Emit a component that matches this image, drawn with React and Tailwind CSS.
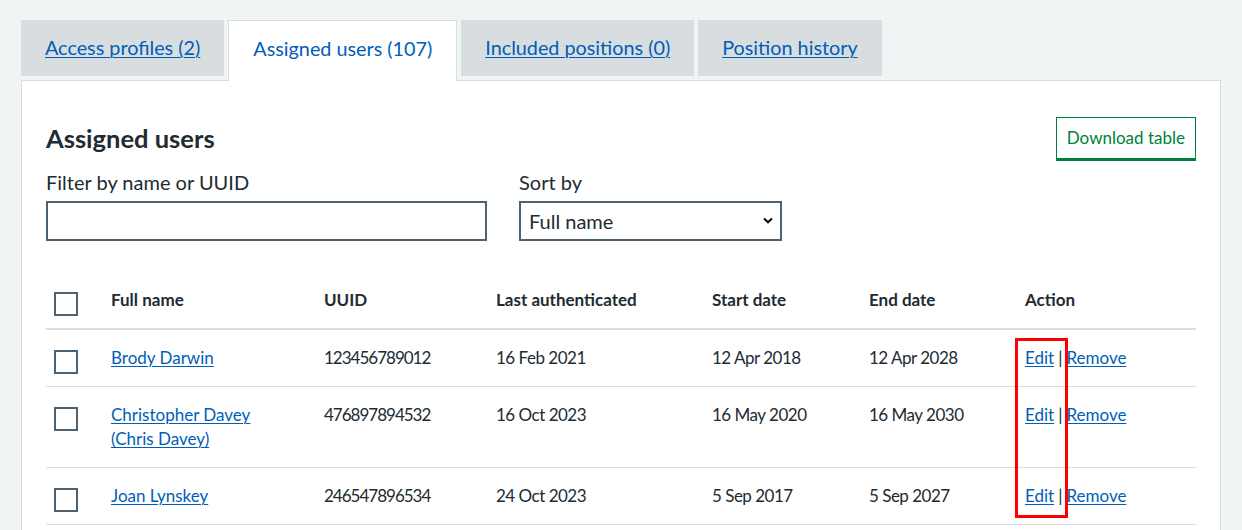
const tabs = [
  { label: 'Access profiles (2)', active: false },
  { label: 'Assigned users (107)', active: true },
  { label: 'Included positions (0)', active: false },
  { label: 'Position history', active: false },
];

const users = [
  { name: ['Brody Darwin'], uuid: '123456789012', last: '16 Feb 2021', start: '12 Apr 2018', end: '12 Apr 2028' },
  { name: ['Christopher Davey', '(Chris Davey)'], uuid: '476897894532', last: '16 Oct 2023', start: '16 May 2020', end: '16 May 2030' },
  { name: ['Joan Lynskey'], uuid: '246547896534', last: '24 Oct 2023', start: '5 Sep 2017', end: '5 Sep 2027' },
];

const Checkbox = () => (
  <div className="translate-y-1 ml-2 w-6 h-6 border-2 border-[#4c6272] bg-white"></div>
);

const App = () => {
  return (
    <div className="min-h-[530px] bg-[#f0f4f5] px-[21px] pt-5 text-[#212b32] font-['Lato','Liberation_Sans',sans-serif] text-[17px] leading-6">
      <div className="flex items-start gap-1 text-[19.8px]">
        {tabs.map((t) =>
          t.active ? (
            <div key={t.label} className="relative z-10 -mb-px bg-white border border-b-0 border-[#d8dde0] px-6 pt-[15px] pb-[21px] text-[#005eb8]">
              {t.label}
            </div>
          ) : (
            <div key={t.label} className="bg-[#d8dde0] px-6 pt-[15px] pb-[17px]">
              <a href="#" className="text-[#005eb8] underline decoration-1 underline-offset-2">{t.label}</a>
            </div>
          )
        )}
      </div>

      <div className="bg-white border border-[#d8dde0] px-6 pt-9 pb-10 min-h-[460px]">
        <div className="flex items-center justify-between">
          <h2 className="text-[25.5px] leading-8 font-bold">Assigned users</h2>
          <button className="border border-[#007f3b] shadow-[0_2px_0_#007f3b] bg-white text-[#007f3b] px-[10px] py-2 leading-6">
            Download table
          </button>
        </div>

        <div className="flex gap-8 mt-[11px] text-[20px]">
          <div className="flex flex-col">
            <label className="mb-[7px]">Filter by name or UUID</label>
            <input className="w-[441px] h-10 border-2 border-[#4c6272] px-2 outline-none" />
          </div>
          <div className="flex flex-col">
            <label className="mb-[7px]">Sort by</label>
            <div className="relative">
              <select className="appearance-none w-[263px] h-10 border-2 border-[#4c6272] bg-white px-2 text-[#212b32]">
                <option>Full name</option>
              </select>
              <svg className="absolute right-[9px] top-[16px] pointer-events-none" width="10" height="7" viewBox="0 0 10 7">
                <path d="M1 1.5 5 5.2 9 1.5" fill="none" stroke="#111" strokeWidth="2.2" />
              </svg>
            </div>
          </div>
        </div>

        <div className="relative mt-[39px]">
          <table className="w-full table-fixed border-collapse text-left">
            <colgroup>
              <col className="w-[65px]" />
              <col className="w-[213px]" />
              <col className="w-[172px]" />
              <col className="w-[216px]" />
              <col className="w-[157px]" />
              <col className="w-[156px]" />
              <col />
            </colgroup>
            <thead>
              <tr className="border-b-2 border-[#d8dde0]">
                <th className="pt-2 pb-4 align-top font-normal"><Checkbox /></th>
                <th className="pt-2 pb-4 align-top font-bold">Full name</th>
                <th className="pt-2 pb-4 align-top font-bold">UUID</th>
                <th className="pt-2 pb-4 align-top font-bold">Last authenticated</th>
                <th className="pt-2 pb-4 align-top font-bold">Start date</th>
                <th className="pt-2 pb-4 align-top font-bold">End date</th>
                <th className="pt-2 pb-4 align-top font-bold">Action</th>
              </tr>
            </thead>
            <tbody>
              {users.map((u) => (
                <tr key={u.uuid} className="border-b border-[#d8dde0]">
                  <td className="py-4 align-top"><Checkbox /></td>
                  <td className="py-4 align-top">
                    <a href="#" className="text-[#005eb8] underline decoration-1 underline-offset-2">
                      {u.name[0]}
                      {u.name[1] && <br />}
                      {u.name[1]}
                    </a>
                  </td>
                  <td className="py-4 align-top tracking-[-1px]">{u.uuid}</td>
                  <td className="py-4 align-top tracking-[-0.5px]">{u.last}</td>
                  <td className="py-4 align-top tracking-[-0.5px]">{u.start}</td>
                  <td className="py-4 align-top tracking-[-0.5px]">{u.end}</td>
                  <td className="py-4 align-top">
                    <a href="#" className="text-[#005eb8] underline decoration-1 underline-offset-2">Edit</a>
                    <span className="mx-[4px]">|</span>
                    <a href="#" className="text-[#005eb8] underline decoration-1 underline-offset-2">Remove</a>
                  </td>
                </tr>
              ))}
            </tbody>
          </table>
          {/* highlight box */}
          <div className="absolute left-[969px] top-[58px] w-[53px] h-[180px] border-[3px] border-[#ff0000] pointer-events-none"></div>
        </div>
      </div>
    </div>
  );
};

export default App;
